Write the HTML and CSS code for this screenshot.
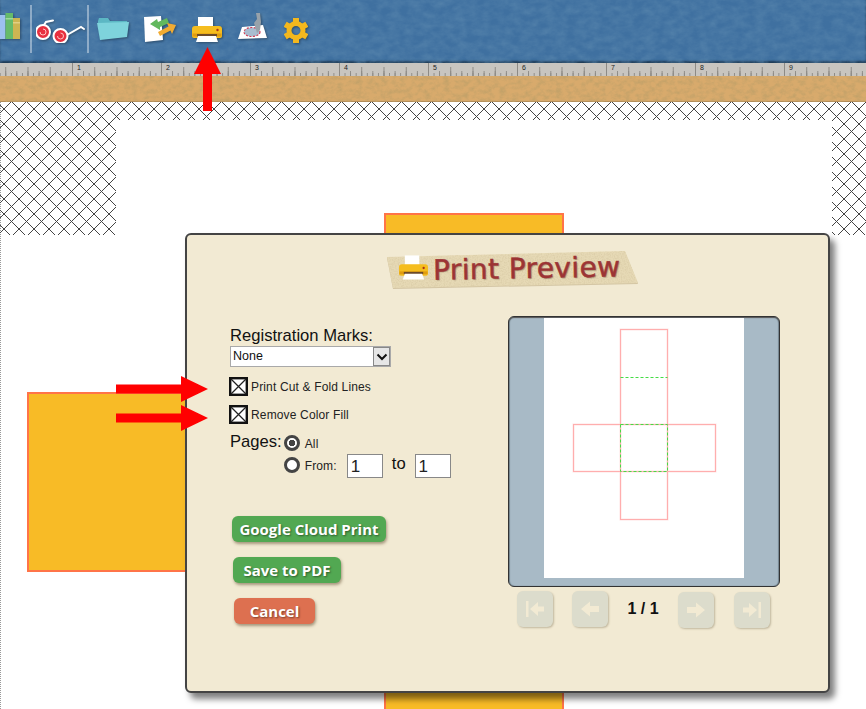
FILE: index.html

```html
<!DOCTYPE html>
<html lang="en">
<head>
  <meta charset="UTF-8" />
  <title>Print Preview</title>
  <link rel="stylesheet" href="styles.css">
</head>
<body>
  <svg class="defs" width="0" height="0">
    <defs>
      <filter id="denim" x="0" y="0" width="100%" height="100%">
        <feTurbulence type="fractalNoise" baseFrequency="0.09 0.14" numOctaves="5" seed="4" />
        <feColorMatrix values="0 0 0 0 0.1  0 0 0 0 0.24  0 0 0 0 0.42  1.1 0 0 0 -0.3" />
      </filter>
      <filter id="cork" x="0" y="0" width="100%" height="100%">
        <feTurbulence type="fractalNoise" baseFrequency="0.16 0.22" numOctaves="4" seed="9" />
        <feColorMatrix values="0 0 0 0 0.55  0 0 0 0 0.36  0 0 0 0 0.14  2.2 0 0 0 -0.85" />
      </filter>
      <filter id="paper" x="0" y="0" width="100%" height="100%">
        <feTurbulence type="fractalNoise" baseFrequency="0.7" numOctaves="2" seed="3" />
        <feColorMatrix values="0 0 0 0 0.6  0 0 0 0 0.5  0 0 0 0 0.3  0.9 0 0 0 -0.35" />
        <feComposite in2="SourceAlpha" operator="in" />
      </filter>
      <pattern id="crosshatch" x="4" y="7" width="15" height="15" patternUnits="userSpaceOnUse">
        <path d="M0 0 15 15M15 0 0 15" stroke="#444" stroke-width="1" />
      </pattern>
      <symbol id="printer" viewBox="0 0 30 26">
        <rect x="6" y="0" width="15" height="11" fill="#fff" />
        <path d="M3 9h24a3 3 0 0 1 3 3v7a2 2 0 0 1-2 2H2a2 2 0 0 1-2-2v-7a3 3 0 0 1 3-3z" fill="#f5bd1f" />
        <rect x="0.500" y="16.500" width="29" height="3" fill="#e09c10" />
        <rect x="5" y="17" width="20" height="2.500" fill="#6b4a2a" />
        <circle cx="25.500" cy="13" r="1.200" fill="#a8321c" />
        <path d="M6 19h18l2 6H4z" fill="#fff" />
      </symbol>
      <symbol id="check-x" viewBox="0 0 19 19">
        <rect x="1.200" y="1.200" width="16.600" height="16.600" fill="#fff" stroke="#111" stroke-width="2.400" />
        <path d="M2 2 17 17M17 2 2 17" stroke="#222" stroke-width="1.300" />
      </symbol>
    </defs>
  </svg>

  <header class="toolbar">
    <svg class="texture" width="100%" height="100%"><rect width="100%" height="100%" filter="url(#denim)" /></svg>
    <svg class="tool tool-books" width="20" height="26" viewBox="0 0 20 26">
      <rect x="0" y="2" width="5.500" height="24" fill="#9cc0ee" />
      <rect x="5.500" y="0" width="7.500" height="26" fill="#66bb6a" />
      <rect x="5.500" y="5" width="7.500" height="1.500" fill="#9ed89f" />
      <rect x="13" y="5" width="7" height="21" fill="#cdb552" />
      <rect x="13" y="9" width="7" height="1.500" fill="#e2d084" />
    </svg>
    <span class="tool-sep tool-sep-first"></span>
    <svg class="tool tool-glasses" width="49" height="24" viewBox="0 0 49 24">
      <path d="M8 6 10 3 17 1.500M31 16 45 8 48 10" fill="none" stroke="#fff" stroke-width="2" stroke-linecap="round" />
      <circle cx="7" cy="13" r="7" fill="#e8303f" stroke="#fff" stroke-width="2" />
      <circle cx="24.500" cy="17" r="7" fill="#e8303f" stroke="#fff" stroke-width="2" />
      <path d="M7 10a3 3 0 1 1-3 3M24.500 14a3 3 0 1 1-3 3" fill="none" stroke="#ffc4c4" stroke-width="1" />
    </svg>
    <span class="tool-sep"></span>
    <svg class="tool tool-folder" width="32" height="23" viewBox="0 0 32 23">
      <path d="M1 4 2 1h9l2 3h17l1 3H1z" fill="#5cb7c4" />
      <path d="M0 6 32 5 30 20 3 23z" fill="#7ed3dc" />
    </svg>
    <svg class="tool tool-doc" width="32" height="26" viewBox="0 0 32 26">
      <path d="M0 1 17 0 19 24 1 26z" fill="#fff" />
      <path d="M6 8 13 3 14 6 23 2 25 7 16 11 16 14z" fill="#62b85e" />
      <path d="M32 9 23 7 24.500 10.500 14 16 16 20 26.500 14.500 28 18z" fill="#f1ab32" />
    </svg>
    <svg class="tool tool-printer" width="30" height="26"><use href="#printer" /></svg>
    <svg class="tool tool-cutter" width="29" height="27" viewBox="0 0 29 27">
      <path d="M4 15 25 13 29 26 0 27z" fill="#fff" />
      <ellipse cx="14" cy="20" rx="8" ry="4.500" fill="#a9bdd0" stroke="#d33c55" stroke-width="1.200" stroke-dasharray="2 1.500" />
      <path d="M18 1h4l1 9-1 8-3 3-3-10 3-4z" fill="#98a2aa" />
    </svg>
    <svg class="tool tool-gear" width="24" height="25" viewBox="0 0 24 25">
      <g fill="#f4b81e">
        <rect x="9" y="0" width="6" height="6" />
        <rect x="9" y="0" width="6" height="6" transform="rotate(60 12 12.500)" />
        <rect x="9" y="0" width="6" height="6" transform="rotate(120 12 12.500)" />
        <rect x="9" y="0" width="6" height="6" transform="rotate(180 12 12.500)" />
        <rect x="9" y="0" width="6" height="6" transform="rotate(240 12 12.500)" />
        <rect x="9" y="0" width="6" height="6" transform="rotate(300 12 12.500)" />
      </g>
      <circle cx="12" cy="12.500" r="7" fill="none" stroke="#f4b81e" stroke-width="5" />
    </svg>
  </header>

  <div class="ruler">
    <span class="ruler-lead"></span>
    <span class="inch">1</span>
    <span class="inch">2</span>
    <span class="inch">3</span>
    <span class="inch">4</span>
    <span class="inch">5</span>
    <span class="inch">6</span>
    <span class="inch">7</span>
    <span class="inch">8</span>
    <span class="inch">9</span>
  </div>

  <div class="corkboard">
    <svg class="texture" width="100%" height="100%"><rect width="100%" height="100%" filter="url(#cork)" /></svg>
  </div>

  <main class="workspace">
    <div class="hatch">
      <svg class="texture" width="100%" height="100%"><rect width="100%" height="100%" fill="url(#crosshatch)" /></svg>
      <div class="sheet"></div>
    </div>

    <div class="shape shape-top"></div>
    <div class="shape shape-left"></div>
    <div class="shape shape-bottom"></div>

    <section class="dialog">
      <div class="banner">
        <svg class="banner-paper" width="252" height="38" viewBox="0 0 252 38">
          <polygon points="0,7 238,1 251,33 6,38" fill="#bfae86" opacity="0.6" />
          <polygon points="0,6 238,0 251,32 6,37" fill="#e6d9b5" />
          <polygon points="0,6 238,0 251,32 6,37" filter="url(#paper)" />
        </svg>
        <svg class="banner-icon" width="29" height="26"><use href="#printer" /></svg>
        <h1 class="banner-title">Print Preview</h1>
      </div>

      <div class="dialog-main">
        <form class="options">
          <div class="label-big label-reg">Registration Marks:</div>
          <div class="select">
            <span class="select-value">None</span>
            <span class="select-arrow">
              <svg width="12" height="8" viewBox="0 0 12 8"><path d="M1.500 1.500 6 6l4.500-4.500" fill="none" stroke="#111" stroke-width="2" /></svg>
            </span>
          </div>

          <div class="check-row check-first">
            <svg class="check" width="19" height="19"><use href="#check-x" /></svg>
            <span class="check-text">Print Cut &amp; Fold Lines</span>
          </div>
          <div class="check-row">
            <svg class="check" width="19" height="19"><use href="#check-x" /></svg>
            <span class="check-text">Remove Color Fill</span>
          </div>

          <div class="pages">
            <span class="label-big label-pages">Pages:</span>
            <div class="pages-choices">
              <div class="radio-row">
                <span class="radio radio-on"></span>
                <span class="small small-all">All</span>
              </div>
              <div class="radio-row radio-row-from">
                <span class="radio"></span>
                <span class="small">From:</span>
                <input class="page-input page-from" type="text" value="1">
                <span class="label-big page-to">to</span>
                <input class="page-input" type="text" value="1">
              </div>
            </div>
          </div>

          <div class="actions">
            <button class="action action-cloud" type="button">Google Cloud Print</button>
            <button class="action action-pdf" type="button">Save to PDF</button>
            <button class="action action-cancel" type="button">Cancel</button>
          </div>
        </form>

        <div class="preview-col">
          <div class="preview">
            <div class="preview-page">
              <svg width="201" height="260" viewBox="0 0 201 260">
                <g fill="none" stroke="#ffe4e4" stroke-width="2">
                  <rect x="76.500" y="10.500" width="47" height="190" />
                  <rect x="29.500" y="105.500" width="142" height="47" />
                </g>
                <g fill="none" stroke="#ffaeae" stroke-width="1">
                  <rect x="76.500" y="10.500" width="47" height="190" />
                  <rect x="29.500" y="105.500" width="142" height="47" />
                </g>
                <g fill="none" stroke="#45dc45" stroke-width="1" stroke-dasharray="3 2">
                  <path d="M76.500 58.500h47" />
                  <rect x="76.500" y="105.500" width="47" height="47" />
                </g>
              </svg>
            </div>
          </div>
          <div class="pager">
            <button class="nav" type="button">
              <svg width="20" height="18" viewBox="0 0 20 18"><path d="M1 1h2.500v16H1zM5 9l8-7v4.500h6v5h-6V16z" /></svg>
            </button>
            <button class="nav nav-prev" type="button">
              <svg width="20" height="18" viewBox="0 0 20 18"><path d="M1 9l9-7.500v4.500h9v6h-9v4.500z" /></svg>
            </button>
            <span class="pager-count">1 / 1</span>
            <button class="nav nav-next" type="button">
              <svg width="20" height="18" viewBox="0 0 20 18"><path d="M19 9l-9-7.500v4.500H1v6h9v4.500z" /></svg>
            </button>
            <button class="nav nav-next nav-last" type="button">
              <svg width="20" height="18" viewBox="0 0 20 18"><path d="M19 1h-2.500v16H19zM15 9 7 2v4.500H1v5h6V16z" /></svg>
            </button>
          </div>
        </div>
      </div>
    </section>

    <svg class="arrow arrow-up" width="27" height="64" viewBox="0 0 27 64"><path d="M13.500 0 27 27H18V64H9V27H0z" /></svg>
    <svg class="arrow arrow-one" width="92" height="26" viewBox="0 0 92 26"><path d="M92 13 65 26V17.500H0V8.500H65V0z" /></svg>
    <svg class="arrow arrow-two" width="92" height="26" viewBox="0 0 92 26"><path d="M92 13 65 26V17.500H0V8.500H65V0z" /></svg>
  </main>
</body>
</html>
```

FILE: styles.css

```css
html, body {
  margin: 0;
  padding: 0;
  height: 100%;
  overflow: hidden;
}
body {
  font-family: "Liberation Sans", Arial, sans-serif;
  background: #fff;
  width: 866px;
  height: 709px;
}
.defs {
  display: block;
  height: 0;
}
.texture {
  position: absolute;
  left: 0;
  top: 0;
}

/* top bar */
.toolbar {
  position: relative;
  display: flex;
  align-items: flex-start;
  height: 63px;
  background: #3f70a0;
  box-shadow: inset 0 -2px 2px #1f3a55;
}
.tool {
  position: relative;
  flex: none;
  filter: drop-shadow(1px 1px 1px rgba(0, 0, 0, 0.35));
}
.tool-books { margin-top: 13px; }
.tool-sep {
  position: relative;
  flex: none;
  width: 2px;
  height: 48px;
  margin: 5px 3px 0 2px;
  background: rgba(255, 255, 255, 0.4);
}
.tool-sep-first { margin-left: 10px; margin-right: 4px; }
.tool-glasses { margin-top: 19px; }
.tool-folder { margin: 17px 15px 0 5px; }
.tool-doc { margin: 16px 16px 0 0; }
.tool-printer { margin: 17px 16px 0 0; }
.tool-cutter { margin: 12px 17px 0 0; }
.tool-gear { margin-top: 18px; }

/* ruler */
.ruler {
  display: flex;
  height: 13px;
  background-color: #c8c5c0;
  overflow: hidden;
}
.ruler-lead, .inch {
  flex: none;
  height: 13px;
  background-image:
    linear-gradient(90deg, #8d8a85 1px, transparent 1px),
    linear-gradient(90deg, #8d8a85 1px, transparent 1px),
    linear-gradient(90deg, #8d8a85 1px, transparent 1px),
    linear-gradient(90deg, #8d8a85 1px, transparent 1px);
  background-size: 89px 13px, 22.25px 9px, 11.125px 5px, 5.5625px 3px;
  background-position: 0 bottom;
  background-repeat: repeat-x;
}
.ruler-lead {
  width: 72px;
  background-position: -17px bottom;
}
.inch {
  width: 84px;
  padding-left: 5px;
  font-size: 7px;
  line-height: 9px;
  color: #222;
}

/* cork strip */
.corkboard {
  position: relative;
  height: 26px;
  background: #d8aa6c;
  box-shadow: inset 0 -1px 0 #b28c58;
}

/* canvas */
.workspace {
  position: relative;
  height: 607px;
  background: #fff;
  border-left: 1px dotted #999;
  box-sizing: border-box;
}
.hatch {
  position: relative;
  height: 133px;
  margin-left: -1px;
  padding: 18px 34px 0 116px;
  box-sizing: border-box;
}
.sheet {
  position: relative;
  height: 115px;
  background: #fff;
}
.shape {
  position: absolute;
  box-sizing: border-box;
  background: #f8bb26;
  border: 2px solid #ff7448;
}
.shape-top { left: 383px; top: 111px; width: 180px; height: 60px; }
.shape-left { left: 26px; top: 290px; width: 180px; height: 180px; }
.shape-bottom { left: 383px; top: 560px; width: 180px; height: 60px; }

/* dialog */
.dialog {
  position: absolute;
  left: 184px;
  top: 131px;
  width: 645px;
  height: 460px;
  box-sizing: border-box;
  background: #f2ead3;
  border: 2px solid #444;
  border-radius: 6px;
  box-shadow: 5px 6px 6px rgba(0, 0, 0, 0.5);
}
.banner {
  position: relative;
  display: flex;
  align-items: center;
  width: 252px;
  height: 37px;
  margin: 16px 0 0 200px;
}
.banner-paper {
  position: absolute;
  left: 0;
  top: 0;
}
.banner-icon {
  position: relative;
  flex: none;
  margin: -4px 0 0 12px;
}
.banner-title {
  position: relative;
  margin: -3px 0 0 5px;
  font-family: "DejaVu Sans", sans-serif;
  font-size: 28px;
  letter-spacing: 0.4px;
  font-weight: normal;
  color: #9c3434;
  white-space: nowrap;
  text-shadow: 1px 1px 1px rgba(90, 50, 30, 0.4);
  -webkit-text-stroke: 0.5px #9c3434;
  transform: rotate(-1deg);
}
.dialog-main {
  display: flex;
  margin-top: 28px;
}

/* left side */
.options {
  width: 278px;
  padding: 10px 0 0 43px;
  flex: none;
}
.label-big {
  font-size: 16.600px;
  line-height: 18px;
  color: #111;
}
.label-reg { padding-top: 1px; height: 17px; }
.select {
  display: flex;
  width: 161px;
  height: 21px;
  margin-top: 2px;
  box-sizing: border-box;
  background: #fff;
  border: 1px solid #a9a9a9;
  font-size: 12.500px;
  line-height: 19px;
  color: #111;
}
.select-value {
  flex: 1;
  padding-left: 2px;
}
.select-arrow {
  display: flex;
  align-items: center;
  justify-content: center;
  width: 17px;
  background: #e6e6e6;
  border: 1px solid #888;
  box-sizing: border-box;
}
.check-row {
  display: flex;
  align-items: center;
  gap: 3px;
  height: 19px;
  margin-top: 9px;
  font-size: 12px;
  letter-spacing: 0.15px;
  color: #222;
}
.check-row .check { margin-left: -1px; }
.check-text { padding-top: 1px; }
.check-first { margin-top: 10px; }
.pages {
  display: flex;
  gap: 2px;
  margin-top: 11px;
}
.label-pages { margin-top: -2px; }
.pages-choices {
  display: flex;
  flex-direction: column;
}
.radio-row {
  display: flex;
  align-items: center;
  gap: 5px;
  height: 16px;
}
.radio-row-from {
  height: 24px;
  margin-top: 3px;
}
.radio {
  box-sizing: border-box;
  width: 16px;
  height: 16px;
  background: #fff;
  border: 3px solid #444;
  border-radius: 50%;
}
.radio-row-from .radio { margin-top: -2px; }
.radio-on {
  background: radial-gradient(circle, #444 0 3px, #fff 3.500px);
}
.small {
  font-size: 12px;
  letter-spacing: 0.15px;
  color: #222;
}
.small-all { padding-top: 2px; }
.page-input {
  width: 36px;
  height: 24px;
  box-sizing: border-box;
  padding: 2px 0 0 3px;
  margin: 0;
  background: #fff;
  border: 1px solid #888;
  font-family: "Liberation Sans", Arial, sans-serif;
  font-size: 17px;
  color: #222;
}
.page-from { margin-left: 5px; }
.page-to { margin: -5px 4px 0 4px; }
.actions {
  display: flex;
  flex-direction: column;
  align-items: flex-start;
  gap: 15px;
  margin-top: 38px;
}
.action {
  height: 26px;
  padding: 0;
  border: 0;
  border-radius: 6px;
  font-family: "Open Sans", sans-serif;
  font-size: 15px;
  font-weight: bold;
  color: #fff;
  text-shadow: 1px 1px 2px rgba(0, 0, 0, 0.45);
  box-shadow: 1px 2px 3px rgba(90, 70, 40, 0.5);
}
.action-cloud { width: 154px; margin-left: 2px; background: #52a852; }
.action-pdf { width: 108px; margin-left: 3px; background: #52a852; }
.action-cancel { width: 81px; margin-left: 4px; background: #dd7050; }

/* right side */
.preview-col {
  width: 272px;
}
.preview {
  height: 271px;
  box-sizing: border-box;
  background: #a8bac6;
  border: 1px solid #333;
  border-radius: 6px;
  box-shadow: inset 0 1px 1px #555, inset 1px 0 1px #778a96, inset -1px 0 1px #778a96;
  padding: 1px 35px 0;
}
.preview-page {
  height: 260px;
  background: #fff;
}
.preview-page svg {
  display: block;
  position: relative;
  top: 1px;
}
.pager {
  display: flex;
  align-items: center;
  margin: 3px 0 0 9px;
}
.nav {
  display: flex;
  align-items: center;
  justify-content: center;
  flex: none;
  width: 36px;
  height: 36px;
  padding: 0;
  border: 0;
  border-radius: 6px;
  background: #dcdccc;
  box-shadow: 1px 1px 2px rgba(120, 110, 80, 0.4);
}
.nav svg { fill: #f2ead3; }
.nav-prev { margin-left: 19px; }
.nav-next { margin-top: 2px; }
.nav-last { margin-left: 20px; }
.pager-count {
  width: 70px;
  text-align: center;
  font-size: 16px;
  font-weight: bold;
  color: #111;
}

/* red arrows */
.arrow {
  position: absolute;
  fill: #ff0000;
}
.arrow-up { left: 193px; top: -55px; }
.arrow-one { left: 115px; top: 274px; }
.arrow-two { left: 115px; top: 303px; }
```
